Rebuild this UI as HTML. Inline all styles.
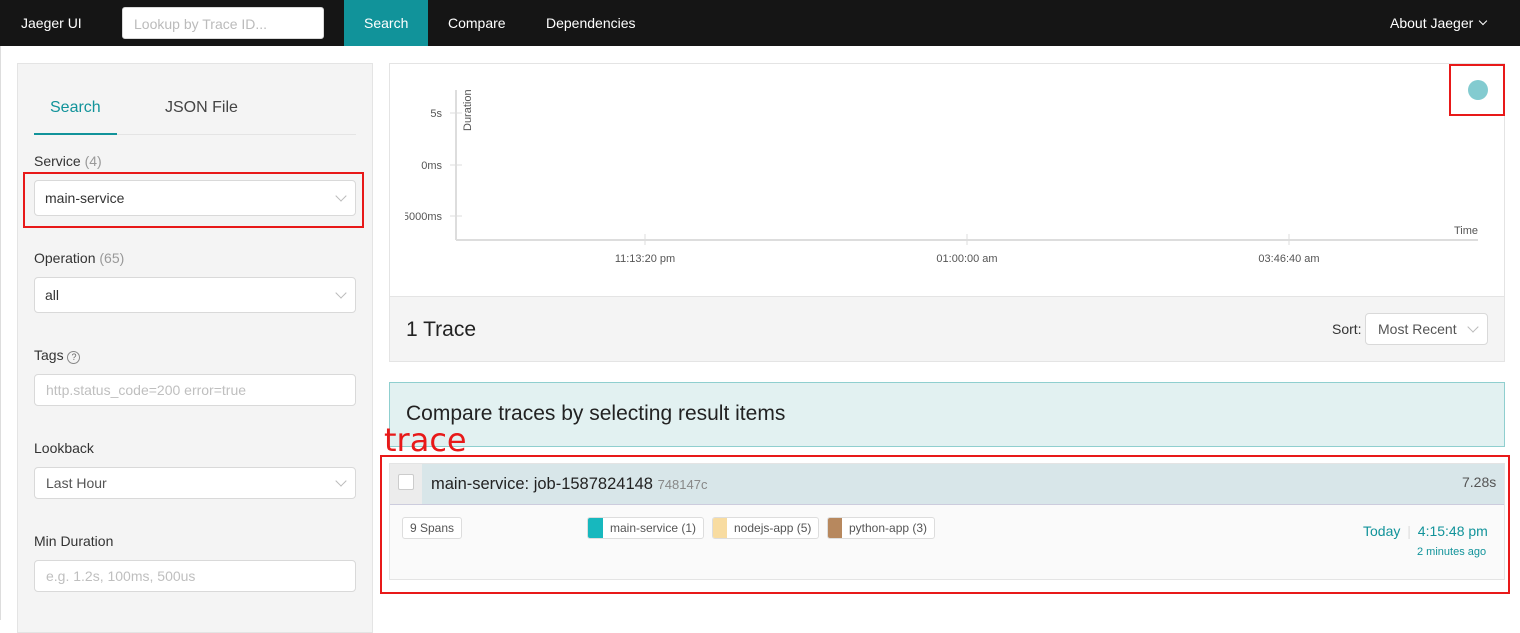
<!DOCTYPE html>
<html><head><meta charset="utf-8"><style>
*{box-sizing:border-box}
body{margin:0;width:1520px;height:620px;overflow:hidden;background:#fff;font-family:"Liberation Sans",sans-serif;color:#333;position:relative}
.abs{position:absolute}
.nav{left:0;top:0;width:1520px;height:46px;background:#151515;color:#fff;font-size:14px}
.nav span{position:absolute;top:15px}
.inp{border:1px solid #d9d9d9;border-radius:4px;background:#fff;font-size:14px}
.ph{color:#bfbfbf}
.chev{position:absolute;right:10px;top:11px;width:8px;height:8px;border-right:1px solid #bbb;border-bottom:1px solid #bbb;transform:rotate(45deg)}
.lbl{font-size:14px;color:#333}
.red{border:2px solid #e81919}
</style></head><body>
<div class="abs nav">
<span style="left:21px">Jaeger UI</span>
<div class="abs inp" style="left:122px;top:7px;width:202px;height:32px;border-radius:3px"><span class="ph" style="position:absolute;left:11px;top:8px;color:#bbb">Lookup by Trace ID...</span></div>
<div class="abs" style="left:344px;top:0;width:84px;height:46px;background:#11939a"></div>
<span style="left:364px">Search</span>
<span style="left:448px">Compare</span>
<span style="left:546px">Dependencies</span>
<span style="left:1390px">About Jaeger</span>
<div class="abs" style="left:1480px;top:18px;width:6px;height:6px;border-right:1px solid #fff;border-bottom:1px solid #fff;transform:rotate(45deg)"></div>
</div>
<div class="abs" style="left:0;top:46px;width:1px;height:574px;background:#ddd"></div>
<!-- left panel -->
<div class="abs" style="left:17px;top:63px;width:356px;height:570px;background:#f4f4f4;border:1px solid #e4e4e4"></div>
<div class="abs" style="left:50px;top:99px;font-size:16px;color:#11939a">Search</div>
<div class="abs" style="left:165px;top:99px;font-size:16px;color:#444">JSON File</div>
<div class="abs" style="left:34px;top:134px;width:322px;height:1px;background:#e4e4e4"></div>
<div class="abs" style="left:34px;top:133px;width:83px;height:2px;background:#11939a"></div>
<div class="abs lbl" style="left:34px;top:153px">Service <span style="color:#999">(4)</span></div>
<div class="abs red" style="left:23px;top:172px;width:341px;height:56px"></div>
<div class="abs inp" style="left:34px;top:180px;width:322px;height:36px"><span style="position:absolute;left:10px;top:9px">main-service</span><i class="chev"></i></div>
<div class="abs lbl" style="left:34px;top:250px">Operation <span style="color:#999">(65)</span></div>
<div class="abs inp" style="left:34px;top:277px;width:322px;height:36px"><span style="position:absolute;left:10px;top:9px">all</span><i class="chev"></i></div>
<div class="abs lbl" style="left:34px;top:347px">Tags <span style="display:inline-block;width:13px;height:13px;border:1px solid #888;border-radius:50%;font-size:9px;text-align:center;line-height:11px;color:#666">?</span></div>
<div class="abs inp" style="left:34px;top:374px;width:322px;height:32px"><span class="ph" style="position:absolute;left:11px;top:7px">http.status_code=200 error=true</span></div>
<div class="abs lbl" style="left:34px;top:440px">Lookback</div>
<div class="abs inp" style="left:34px;top:467px;width:322px;height:32px"><span style="position:absolute;left:11px;top:7px;color:#555">Last Hour</span><i class="chev" style="top:9px"></i></div>
<div class="abs lbl" style="left:34px;top:533px">Min Duration</div>
<div class="abs inp" style="left:34px;top:560px;width:322px;height:32px"><span class="ph" style="position:absolute;left:11px;top:7px">e.g. 1.2s, 100ms, 500us</span></div>
<!-- chart -->
<div class="abs" style="left:389px;top:63px;width:1116px;height:299px;border:1px solid #e4e4e4;background:#fff"></div>
<svg class="abs" style="left:389px;top:63px" width="1116" height="234" font-family="Liberation Sans" font-size="11" fill="#555">
<line x1="67" y1="27" x2="67" y2="177" stroke="#ddd" stroke-width="2"/>
<line x1="67" y1="177" x2="1089" y2="177" stroke="#ddd" stroke-width="2"/>
<line x1="61" y1="50" x2="73" y2="50" stroke="#ddd"/><line x1="61" y1="102" x2="73" y2="102" stroke="#ddd"/><line x1="61" y1="153" x2="73" y2="153" stroke="#ddd"/>
<line x1="256" y1="171" x2="256" y2="182" stroke="#ddd"/><line x1="578" y1="171" x2="578" y2="182" stroke="#ddd"/><line x1="900" y1="171" x2="900" y2="182" stroke="#ddd"/>
<text x="53" y="54" text-anchor="end">5s</text><text x="53" y="106" text-anchor="end">0ms</text><text x="53" y="157" text-anchor="end">-5000ms</text>
<text transform="translate(82,68) rotate(-90)">Duration</text>
<text x="256" y="199" text-anchor="middle">11:13:20 pm</text><text x="578" y="199" text-anchor="middle">01:00:00 am</text><text x="900" y="199" text-anchor="middle">03:46:40 am</text>
<text x="1089" y="171" text-anchor="end">Time</text>
<circle cx="1089" cy="27" r="10" fill="#83cbd0"/>
</svg>
<div class="abs" style="left:390px;top:200px;width:15px;height:30px;background:#fff"></div>
<div class="abs red" style="left:1449px;top:64px;width:56px;height:52px"></div>
<div class="abs" style="left:390px;top:296px;width:1114px;height:65px;background:#f4f4f4;border-top:1px solid #e4e4e4"></div>
<div class="abs" style="left:406px;top:318px;font-size:21px;color:#222">1 Trace</div>
<div class="abs" style="left:1332px;top:321px;font-size:14px">Sort:</div>
<div class="abs inp" style="left:1365px;top:313px;width:123px;height:32px"><span style="position:absolute;left:12px;top:7px;color:#555">Most Recent</span><i class="chev" style="top:9px"></i></div>
<!-- compare -->
<div class="abs" style="left:389px;top:382px;width:1116px;height:65px;background:#e2f1f1;border:1px solid #8fcfcf"></div>
<div class="abs" style="left:406px;top:402px;font-size:21px;color:#222">Compare traces by selecting result items</div>
<div class="abs" style="left:384px;top:421px;font-size:32px;color:#e81919;font-family:'DejaVu Sans',sans-serif">trace</div>
<!-- trace item -->
<div class="abs red" style="left:380px;top:455px;width:1130px;height:139px"></div>
<div class="abs" style="left:389px;top:463px;width:1116px;height:117px;background:#fafafa;border:1px solid #e4e4e4"></div>
<div class="abs" style="left:390px;top:464px;width:1114px;height:41px;background:#d8e6e9;border-bottom:1px solid #ccd"></div>
<div class="abs" style="left:390px;top:464px;width:32px;height:40px;background:#ececec"></div>
<div class="abs" style="left:398px;top:474px;width:16px;height:16px;background:#fff;border:1px solid #ccc;border-radius:2px"></div>
<div class="abs" style="left:431px;top:475px;font-size:16.5px;color:#222">main-service: job-1587824148 <span style="font-size:13px;color:#888">748147c</span></div>
<div class="abs" style="left:1462px;top:474px;font-size:14px;color:#555">7.28s</div>
<div class="abs" style="left:402px;top:517px;height:22px;border:1px solid #ddd;border-radius:3px;font-size:12px;padding:3px 7px;background:#fff;color:#555">9 Spans</div>
<div class="abs" style="left:587px;top:517px;height:22px;border:1px solid #ddd;border-radius:3px;font-size:12px;padding:3px 7px 0 22px;background:#fff;color:#555;overflow:hidden">main-service (1)<i class="abs" style="left:0;top:0;width:15px;height:22px;background:#17b8be"></i></div>
<div class="abs" style="left:712px;top:517px;height:22px;border:1px solid #ddd;border-radius:3px;font-size:12px;padding:3px 7px 0 21px;background:#fff;color:#555;overflow:hidden">nodejs-app (5)<i class="abs" style="left:0;top:0;width:14px;height:22px;background:#f8dca1"></i></div>
<div class="abs" style="left:827px;top:517px;height:22px;border:1px solid #ddd;border-radius:3px;font-size:12px;padding:3px 7px 0 21px;background:#fff;color:#555;overflow:hidden">python-app (3)<i class="abs" style="left:0;top:0;width:14px;height:22px;background:#b7885e"></i></div>
<div class="abs" style="left:1363px;top:523px;font-size:14px;color:#11939a">Today <span style="color:#ddd;margin:0 3px">|</span> 4:15:48 pm</div>
<div class="abs" style="left:1417px;top:546px;font-size:11px;color:#11939a">2 minutes ago</div>
</body></html>
